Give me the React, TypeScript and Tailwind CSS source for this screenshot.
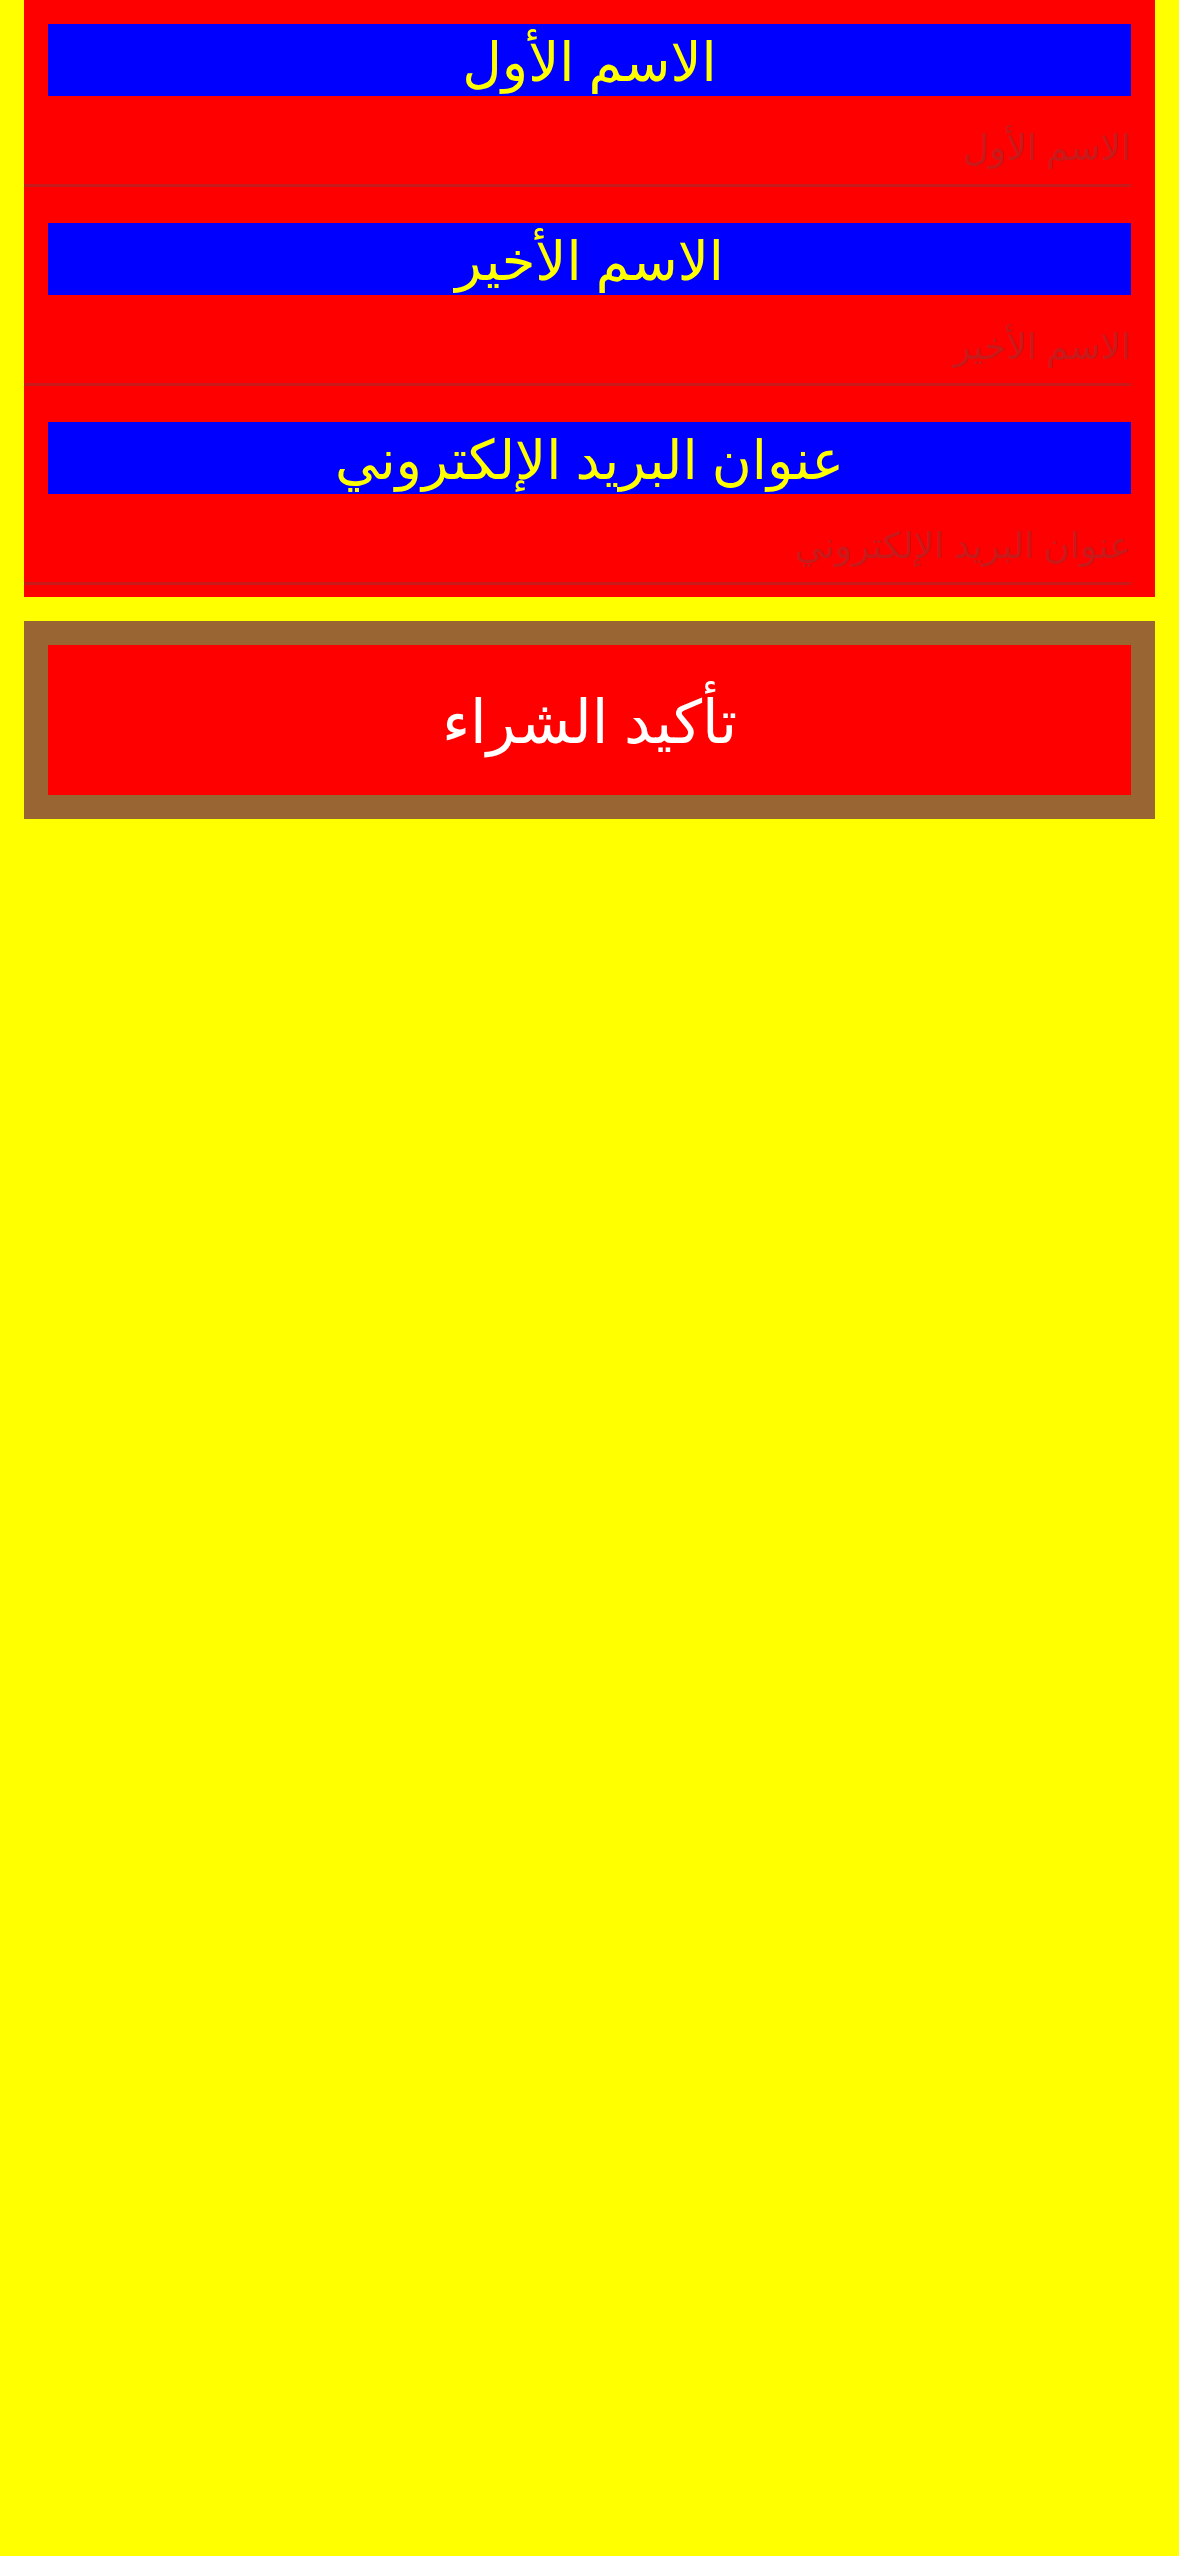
import React from 'react';

const fields = [
  { label: 'الاسم الأول', placeholder: 'الاسم الأول', type: 'text' },
  { label: 'الاسم الأخير', placeholder: 'الاسم الأخير', type: 'text' },
  { label: 'عنوان البريد الإلكتروني', placeholder: 'عنوان البريد الإلكتروني', type: 'email' },
];

export default function App() {
  return (
    <div
      dir="rtl"
      className="min-h-[2556px] bg-[#ffff00] px-[24px]"
      style={{ fontFamily: '"Noto Sans", "DejaVu Sans", sans-serif' }}
    >
      <form className="bg-[#ff0000]">
        {fields.map((f) => (
          <div key={f.label} className="pt-[24px] pb-[12px]">
            <label className="mx-[24px] flex h-[72px] items-center justify-center bg-[#0000ff] text-[54.5px] leading-none text-[#ffff00]">
              {f.label}
            </label>
            <input
              type={f.type}
              placeholder={f.placeholder}
              className="ms-[24px] block h-[91px] w-[calc(100%-24px)] border-b-[3px] border-[#c81a1a] bg-transparent pt-[12px] text-right text-[36px] outline-none placeholder:text-[#c81a1a]"
            />
          </div>
        ))}
      </form>
      <div className="mt-[24px] bg-[#996633] p-[24px]">
        <button
          type="button"
          className="flex h-[150px] w-full items-center justify-center bg-[#ff0000] text-[60px] text-white"
        >
          تأكيد الشراء
        </button>
      </div>
    </div>
  );
}
